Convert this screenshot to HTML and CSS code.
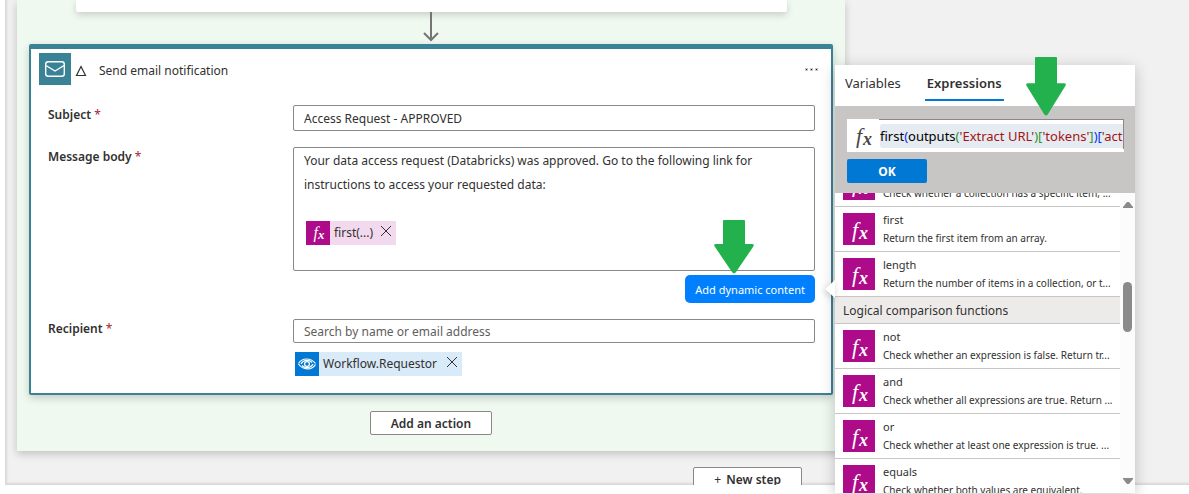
FILE: index.html
```html
<!DOCTYPE html>
<html lang="en">
<head>
<meta charset="utf-8">
<meta name="viewport" content="width=device-width, initial-scale=1">
<title>Send email notification</title>
<link rel="stylesheet" href="styles.css">
</head>
<body>
<main class="canvas">
  <section class="scope">
    <div class="previous-card"></div>
    <svg class="connector" viewBox="0 0 16 32" aria-hidden="true"><path d="M8 0V28M1 21L8 28L15 21"/></svg>

    <article class="card">
      <header class="card-header">
        <span class="card-icon">
          <svg viewBox="0 0 32 32" aria-hidden="true"><rect x="6.7" y="8.7" width="18.6" height="14.6" rx="2.5"/><path d="M7 12.5L16 18L25 12.5"/></svg>
        </span>
        <svg class="warning" viewBox="0 0 12 12" aria-hidden="true"><path d="M6 1.5L10.5 10.5H1.5Z"/></svg>
        <h1 class="card-title">Send email notification</h1>
        <button class="more" type="button" aria-label="Menu"><i></i><i></i><i></i></button>
      </header>

      <div class="form">
        <label class="label" for="subject">Subject <span class="required">*</span></label>
        <input class="input input-subject" id="subject" type="text" value="Access Request - APPROVED">

        <span class="label" id="body-label">Message body <span class="required">*</span></span>
        <div class="body-field">
          <div class="textarea" role="textbox" aria-multiline="true" aria-labelledby="body-label" contenteditable="true" spellcheck="false"><p>Your data access request (Databricks) was approved. Go to the following link for instructions to access your requested data:</p><span class="token token-expression" contenteditable="false"><span class="token-icon fx fx-small" aria-hidden="true"><i>f</i><i>x</i></span><span class="token-name">first(...)</span><button class="token-remove" type="button" aria-label="Remove first"><svg viewBox="0 0 10 10" aria-hidden="true"><path d="M0 0l10 10M10 0l-10 10"/></svg></button></span></div>
          <button class="dynamic" type="button">Add dynamic content</button>
        </div>

        <label class="label" for="recipient">Recipient <span class="required">*</span></label>
        <div class="recipient-field">
          <input class="input" id="recipient" type="text" placeholder="Search by name or email address">
          <span class="token token-workflow">
            <svg class="token-icon" viewBox="0 0 24 24" aria-hidden="true"><path d="M3.5 11.5C7 5.5 16 5.5 20.5 11.5"/><path d="M20.5 12.5C17 18.5 8 18.5 3.5 12"/><path d="M6 12C8 7.8 14 7 17 10.5"/><path d="M18 12C16 16.2 10 17 7 13.5"/><circle cx="12" cy="12" r="2.4"/></svg>
            <span class="token-name">Workflow.Requestor</span>
            <button class="token-remove" type="button" aria-label="Remove Workflow.Requestor"><svg viewBox="0 0 10 10" aria-hidden="true"><path d="M0 0l10 10M10 0l-10 10"/></svg></button>
          </span>
        </div>
      </div>
    </article>

    <button class="button" type="button">Add an action</button>
  </section>
  <div class="next">
    <button class="button" type="button"><span class="plus">+</span> New step</button>
  </div>
</main>

<aside class="popover">
  <span class="pointer"></span>
  <div class="tabs" role="tablist">
    <button class="tab" type="button" role="tab" aria-selected="false">Variables</button>
    <button class="tab tab-active" type="button" role="tab" aria-selected="true">Expressions</button>
  </div>
  <div class="editor">
    <div class="editor-row">
      <span class="editor-icon fx" aria-hidden="true"><i>f</i><i>x</i></span>
      <div class="editor-box"><div class="code" role="textbox" aria-label="Expression" contenteditable="true" spellcheck="false">first<b class="c1">(</b>outputs<b class="c2">(</b><b class="str">'Extract URL'</b><b class="c2">)[</b><b class="str">'tokens'</b><b class="c2">]</b><b class="c1">)[</b><b class="str">'act</b></div></div>
    </div>
    <button class="ok" type="button">OK</button>
  </div>
  <div class="results">
    <ul class="list">
      <li class="item"><span class="item-icon fx" aria-hidden="true"><i>f</i><i>x</i></span><div class="item-text"><span class="name"></span><span class="desc">Check whether a collection has a specific item, ...</span></div></li>
      <li class="item"><span class="item-icon fx" aria-hidden="true"><i>f</i><i>x</i></span><div class="item-text"><span class="name">first</span><span class="desc">Return the first item from an array.</span></div></li>
      <li class="item"><span class="item-icon fx" aria-hidden="true"><i>f</i><i>x</i></span><div class="item-text"><span class="name">length</span><span class="desc">Return the number of items in a collection, or t...</span></div></li>
      <li class="group">Logical comparison functions</li>
      <li class="item"><span class="item-icon fx" aria-hidden="true"><i>f</i><i>x</i></span><div class="item-text"><span class="name">not</span><span class="desc">Check whether an expression is false. Return tr...</span></div></li>
      <li class="item"><span class="item-icon fx" aria-hidden="true"><i>f</i><i>x</i></span><div class="item-text"><span class="name">and</span><span class="desc">Check whether all expressions are true. Return ...</span></div></li>
      <li class="item"><span class="item-icon fx" aria-hidden="true"><i>f</i><i>x</i></span><div class="item-text"><span class="name">or</span><span class="desc">Check whether at least one expression is true. ...</span></div></li>
      <li class="item"><span class="item-icon fx" aria-hidden="true"><i>f</i><i>x</i></span><div class="item-text"><span class="name">equals</span><span class="desc">Check whether both values are equivalent.</span></div></li>
    </ul>
    <div class="scrollbar" aria-hidden="true">
      <svg viewBox="0 0 10 8"><path d="M4 1H6L10 6V7H0V6Z"/></svg>
      <span class="thumb"></span>
      <svg viewBox="0 0 10 8"><path d="M4 7H6L10 2V1H0V2Z"/></svg>
    </div>
  </div>
</aside>

<svg class="marker marker-dynamic" preserveAspectRatio="none" viewBox="0 0 40 56" aria-hidden="true"><path d="M10 0H30Q31 0 31 1V25H38Q41 25 39 28L22 54Q20 57 18 54L1 28Q-1 25 2 25H9V1Q9 0 10 0Z"/></svg>
<svg class="marker marker-editor" preserveAspectRatio="none" viewBox="0 0 40 56" aria-hidden="true"><path d="M10 0H30Q31 0 31 1V25H38Q41 25 39 28L22 54Q20 57 18 54L1 28Q-1 25 2 25H9V1Q9 0 10 0Z"/></svg>
</body>
</html>
```
FILE: styles.css
```css
* { box-sizing: border-box; }

body {
  position: relative;
  display: flex;
  flex-direction: column;
  height: 100vh;
  margin: 0;
  padding: 0 0 9px 5px;
  overflow: hidden;
  background: #fff;
  color: #323130;
  font: 12px/16px "Noto Sans", "Open Sans", sans-serif;
}

button, input { font: inherit; color: inherit; }
button { cursor: pointer; }

.canvas {
  flex: 1;
  min-height: 0;
  overflow: hidden;
  padding-left: 12px;
  background: #f1f1f1;
  box-shadow: inset 2px -2px 2px #d8d8d8;
}

/* Scope that holds the approval steps */
.scope {
  display: flex;
  flex-direction: column;
  align-items: center;
  margin-right: 344px;
  padding: 0 12px 16px;
  background: #eff9f0;
  box-shadow: 0 3px 8px rgba(0, 0, 0, .2);
}

.previous-card {
  align-self: stretch;
  height: 12px;
  margin: 0 46px 0 47px;
  border-radius: 0 0 2px 2px;
  background: #fff;
  box-shadow: 0 3px 7px rgba(0, 0, 0, .16);
}

.connector { width: 16px; height: 32px; fill: none; stroke: #757575; stroke-width: 2; }

.card {
  align-self: stretch;
  margin-bottom: 16px;
  padding-bottom: 17px;
  border: 2px solid #3a8296;
  border-top-width: 5px;
  border-radius: 2px;
  background: #fff;
  box-shadow: 0 3px 8px rgba(0, 0, 0, .18);
}

.card-header {
  display: flex;
  align-items: center;
  padding: 4px 12px 0 8px;
}

.card-icon { width: 32px; height: 32px; background: #3a8296; }
.card-icon svg { display: block; fill: none; stroke: #fff; stroke-width: 1.4; }

.warning { width: 12px; height: 12px; margin: 3px 12px 0 4px; fill: none; stroke: #323130; stroke-width: 1.2; }

.card-title { flex: 1; margin: 0; padding-top: 3px; font-size: 12px; font-weight: 400; line-height: 16px; }

.more { display: flex; gap: 4px; padding: 2px; border: 0; background: none; }
.more i { width: 1px; height: 1px; outline: 1px solid rgba(32, 31, 30, .25); background: #201f1e; }

.form {
  display: grid;
  grid-template-columns: 245px 1fr;
  row-gap: 16px;
  padding: 20px 16px 0 17px;
}

.label { padding-top: 2px; font-weight: 600; }
.required { color: #a4262c; font-weight: 400; }

.input {
  display: block;
  width: 100%;
  height: 24px;
  padding: 0 10px;
  border: 1px solid #8a8886;
  border-radius: 2px;
  background: #fff;
}
.input-subject { height: 26px; }
.input::placeholder { color: #605e5c; opacity: 1; }

.textarea {
  height: 124px;
  padding: 1px 10px 0;
  border: 1px solid #8a8886;
  border-radius: 2px;
  line-height: 24px;
}
.textarea p { max-width: 480px; margin: 0 0 24px; }
.textarea .token { margin-left: 2px; }

.body-field { display: flex; flex-direction: column; gap: 4px; }

.dynamic {
  align-self: flex-end;
  height: 28px;
  padding: 2px 10px 0;
  border: 0;
  border-radius: 5px;
  background: #0080ff;
  color: #fff;
  font-size: 11px;
}

.token { display: inline-flex; height: 24px; vertical-align: top; line-height: 24px; }
.token-icon { width: 24px; height: 24px; }
.token-name { padding: 0 8px 0 4px; }
.token-remove { display: flex; padding: 5px 5px 0 0; border: 0; background: none; }
.token-remove svg { width: 10px; height: 10px; fill: none; stroke: #323130; stroke-width: 1; }
.token-expression { background: #f3d9ee; }
.token-expression .token-icon { background: #ad0b89; }
.token-workflow { margin: 9px 0 0 2px; background: #d9eaf8; }
.token-workflow .token-icon { background: #0078d4; fill: none; stroke: #fff; stroke-width: 1.2; }
.token-workflow .token-name { padding-right: 10px; }

/* Function glyph */
.fx {
  display: flex;
  flex: none;
  align-items: flex-start;
  justify-content: center;
  padding: 4px 0 0 2px;
  color: #fff;
  font: italic 22px/26px "Liberation Serif", serif;
}
.fx i:last-child { margin-left: 1px; font-size: 18px; font-weight: 700; line-height: 32px; }
.fx-small { padding-top: 2px; font-size: 16px; line-height: 20px; }
.fx-small i:last-child { margin-left: 0; font-size: 13px; line-height: 24px; }

.button {
  height: 24px;
  padding: 1px 20px 0;
  border: 1px solid #8a8886;
  border-radius: 2px;
  background: #fff;
  font-weight: 600;
}

.next { display: flex; justify-content: flex-end; margin-right: 387px; padding-top: 16px; }
.plus { margin-right: 2px; font-weight: 400; }

/* Expression picker */
.popover {
  position: absolute;
  top: 65px;
  right: 54px;
  bottom: 1px;
  display: flex;
  flex-direction: column;
  width: 300px;
  background: #fff;
  box-shadow: 0 3px 14px rgba(0, 0, 0, .22);
}

.pointer {
  position: absolute;
  top: 215px;
  left: -10px;
  width: 10px;
  height: 18px;
  filter: drop-shadow(-1px 2px 3px rgba(0, 0, 0, .2));
}
.pointer::before {
  content: "";
  display: block;
  height: 100%;
  background: #fff;
  clip-path: polygon(100% 0, 100% 100%, 0 50%);
}

.tabs { display: flex; gap: 22px; height: 41px; padding: 0 8px; font-size: 13px; }
.tab { height: 36px; padding: 2px 2px 0; border: 0; border-bottom: 2px solid transparent; background: none; }
.tab-active { border-bottom-color: #0078d4; font-weight: 600; }

.editor { padding: 13px 11px 10px 12px; background: #c8c6c4; }
.editor-row { display: flex; height: 33px; margin-bottom: 7px; background: #fff; }
.editor-icon { width: 32px; height: 32px; color: #484644; }
.editor-box { flex: 1; min-width: 0; height: 30px; padding: 4px 0 0 1px; border: solid #8a8886; border-width: 1px 1px 0 0; }
.code { overflow: hidden; border-radius: 3px 0 0 3px; background: #e5ebf1; color: #000; font-size: 13px; line-height: 24px; white-space: nowrap; }
.code b { font-weight: 400; }
.code .c1 { color: #0431fa; }
.code .c2 { color: #319331; }
.code .str { color: #a31515; }

.ok {
  display: block;
  width: 80px;
  height: 24px;
  padding: 1px 0 0;
  border: 0;
  border-radius: 2px;
  background: #0078d4;
  color: #fff;
  font-weight: 700;
}

.results { display: flex; flex: 1; min-height: 0; overflow: hidden; }

.list { flex: 1; min-width: 0; margin: -31px 0 0; padding: 0; list-style: none; }
.item { display: flex; gap: 8px; height: 45px; padding: 6px 0 0 8px; border-bottom: 1px solid #c8c6c4; }
.item-icon { width: 32px; height: 32px; background: #ad0b89; }
.item-text { font-size: 11px; line-height: 14px; white-space: nowrap; }
.name, .desc { display: block; }
.name { height: 14px; margin-bottom: 4px; }
.desc { font-size: 10px; }
.group { height: 27px; padding-left: 8px; border-bottom: 1px solid #c8c6c4; background: #edebe9; line-height: 28px; }

.scrollbar {
  display: flex;
  flex-direction: column;
  align-items: center;
  width: 15px;
  padding: 8px 0;
  background: #fcfcfc;
}
.scrollbar svg { width: 10px; height: 8px; fill: #8a8a8a; }
.thumb { width: 9px; height: 50px; margin: 73px 0 auto; border-radius: 5px; background: #8a8a8a; }

/* Callout arrows laid over the page */
.marker { position: absolute; fill: #22b14c; }
.marker-dynamic { top: 220px; right: 435px; width: 40px; height: 54px; }
.marker-editor { top: 57px; right: 123px; width: 40px; height: 59px; }
```
